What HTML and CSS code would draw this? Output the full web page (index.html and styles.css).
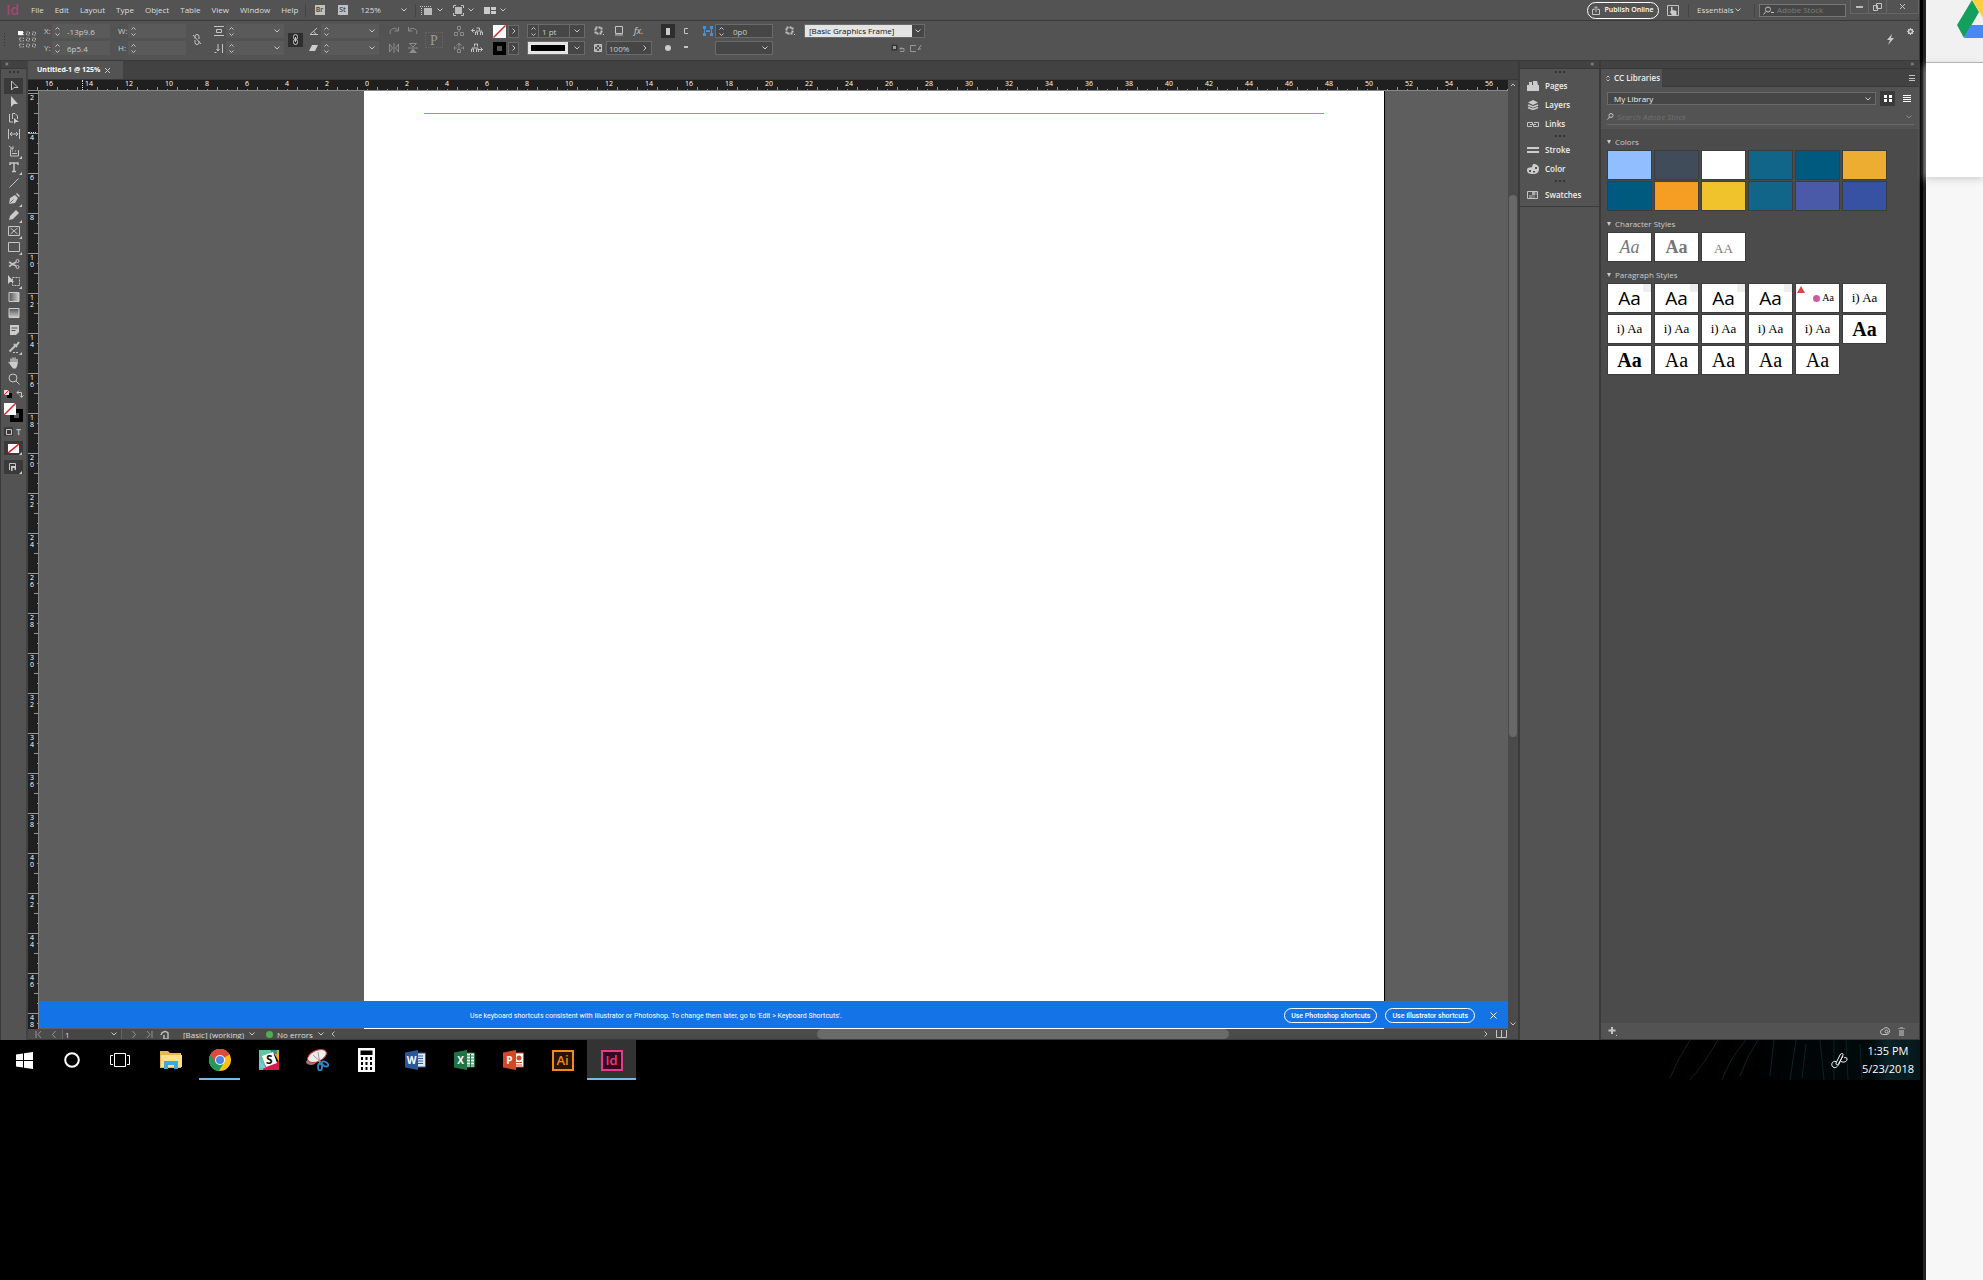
FILE: index.html
```html
<!DOCTYPE html>
<html lang="en">
<head>
<meta charset="utf-8">
<title>Untitled-1 @ 125%</title>
<link rel="stylesheet" href="styles.css">
</head>
<body>
<svg class="defs" aria-hidden="true">
<defs>
<symbol id="spin" viewBox="0 0 5 11"><path d="M.5 3.500 2.500 1.500 4.500 3.500M.5 7.500l2 2 2-2" class="ln"/></symbol>
<symbol id="chev" viewBox="0 0 6 4"><path d="M.5.5 3 3 5.500.5" class="ln"/></symbol>
<symbol id="right" viewBox="0 0 4 6"><path d="M.5.5 3 3 .5 5.500" class="ln"/></symbol>
<symbol id="none" viewBox="0 0 13 13"><path fill="#fff" d="M0 0h13v13H0z"/><path d="M.5 12.500 12.500.5" stroke="#d22" stroke-width="1.500"/></symbol>
</defs>
</svg>
<div class="screen">
<main class="desktop">
<div class="app">

<header class="menubar">
  <b class="logo">Id</b>
  <nav class="menus"><a href="#">File</a><a href="#">Edit</a><a href="#">Layout</a><a href="#">Type</a><a href="#">Object</a><a href="#">Table</a><a href="#">View</a><a href="#">Window</a><a href="#">Help</a></nav>
  <i class="bar-sep"></i>
  <button class="tag">Br</button><button class="tag">St</button>
  <label class="zoom"><select aria-label="Zoom level"><option>125%</option></select></label>
  <i class="bar-sep tight"></i>
  <div class="views">
    <button aria-label="View options"><svg width="13" height="11" viewBox="0 0 13 11"><path d="M4 3h8v7H4z" fill="#bbb"/><path d="M0 1.500h12M1.500 3v8" class="ln" stroke-dasharray="1 1"/></svg></button><svg class="chev"><use href="#chev"/></svg>
    <button aria-label="Screen mode"><svg width="11" height="11" viewBox="0 0 11 11"><path d="M2 2h7v7H2z" fill="#bbb"/><path d="M.5 3V.5H3M8 .5h2.500V3M.5 8v2.500H3M8 10.500h2.500V8" class="ln"/></svg></button><svg class="chev"><use href="#chev"/></svg>
    <button aria-label="Arrange documents"><svg width="12" height="9" viewBox="0 0 12 9"><path d="M0 1h6v7H0zM7 1h5v3H7zM7 5h5v3H7z" fill="#ccc"/></svg></button><svg class="chev"><use href="#chev"/></svg>
  </div>
  <div class="menubar-right">
    <button class="publish"><svg width="8" height="9" viewBox="0 0 8 9"><path d="M2.500 3.500h-2v5h7v-5h-2M4 6V1M2 2.500 4 .5l2 2" class="ln"/></svg>Publish Online</button>
    <button class="touch" aria-label="Touch workspace"><svg width="12" height="11" viewBox="0 0 12 11"><path d="M.5.5h11v10H.5z" class="ln"/><path d="M4 2h1.500v3l4 1v4H5L2.500 6.500H4z" fill="#ccc"/></svg></button>
    <i class="bar-sep"></i>
    <label class="workspace"><select aria-label="Workspace"><option>Essentials</option></select></label>
    <i class="bar-sep"></i>
    <label class="stock"><svg width="11" height="9" viewBox="0 0 11 9"><circle cx="5" cy="3.500" r="2.500" class="ln"/><path d="M3 5.500.5 8.500M8 6.500h3" class="ln"/></svg><input placeholder="Adobe Stock" aria-label="Search Adobe Stock"></label>
    <div class="winbtns"><button aria-label="Minimize"><svg width="7" height="7"><path d="M0 3h7v2H0z" fill="#bbb"/></svg></button><button aria-label="Restore"><svg width="9" height="8" viewBox="0 0 9 8"><path d="M3.500.5h5v5h-5zM.5 2.500h4v5h-4z" class="ln"/></svg></button><button aria-label="Close"><svg width="7" height="7" viewBox="0 0 7 7"><path d="M1 1l5 5M6 1 1 6" class="ln"/></svg></button></div>
  </div>
</header>

<section class="control" aria-label="Control panel">
  <div class="tall ref"><svg width="36" height="19" viewBox="0 0 36 19"><path d="M4.500 3v13" stroke="#333" stroke-dasharray="1 2"/><g fill="none" stroke="#aaa"><path d="M19.500 2h4v3h-4zM26.500 2h3v3h-3zM32.500 2h3v3h-3zM19.500 8h4v3h-4zM26.500 8h3v3h-3zM32.500 8h3v3h-3zM19.500 14h4v3h-4zM26.500 14h3v3h-3zM32.500 14h3v3h-3z" stroke-dasharray="2 1"/></g><path d="M18 1h5v4h-5z" fill="#fff"/></svg></div>
  <label for="fx">X:</label><label for="fy">Y:</label>
  <div class="field"><svg class="spin"><use href="#spin"/></svg><input id="fx" value="-13p9.6"></div>
  <div class="field"><svg class="spin"><use href="#spin"/></svg><input id="fy" value="6p5.4"></div>
  <label for="fw">W:</label><label for="fh">H:</label>
  <div class="field"><svg class="spin"><use href="#spin"/></svg><input id="fw"></div>
  <div class="field"><svg class="spin"><use href="#spin"/></svg><input id="fh"></div>
  <button class="tall" aria-label="Constrain proportions"><svg width="10" height="11" viewBox="0 0 10 11"><path d="M3 4.500V2.500a2 2 0 0 1 4 0V5M3 6v2.500a2 2 0 0 0 4 0V7M1 1l8 9" class="ln"/></svg></button>
  <svg class="ic" viewBox="0 0 10 10"><path d="M0 .5h10M0 9.500h10M2.500 3.500h5v3h-5z" class="ln"/></svg>
  <svg class="ic" viewBox="0 0 10 10"><path d="M.5 9.500h2M4 1v7M2.500 6 4 8l1.500-2M8.500 1v9" class="ln"/></svg>
  <div class="field"><svg class="spin"><use href="#spin"/></svg><input aria-label="Scale X"><svg class="chev"><use href="#chev"/></svg></div>
  <div class="field"><svg class="spin"><use href="#spin"/></svg><input aria-label="Scale Y"><svg class="chev"><use href="#chev"/></svg></div>
  <button class="tall chain" aria-label="Link scale"><svg width="7" height="11" viewBox="0 0 7 11"><rect x="1.500" y=".5" width="4" height="5" rx="2" class="ln"/><rect x="1.500" y="5.500" width="4" height="5" rx="2" class="ln"/><path d="M3.500 3v5" class="ln"/></svg></button>
  <svg class="ic" viewBox="0 0 10 10"><path d="M9 8.500H1L8 2M5 5.500l2 3" class="ln"/></svg>
  <svg class="ic" viewBox="0 0 10 10"><path d="M3 2h6L6 8H0z" fill="#ccc"/></svg>
  <div class="field"><svg class="spin"><use href="#spin"/></svg><input aria-label="Rotation angle"><svg class="chev"><use href="#chev"/></svg></div>
  <div class="field"><svg class="spin"><use href="#spin"/></svg><input aria-label="Shear angle"><svg class="chev"><use href="#chev"/></svg></div>
  <svg class="ic dim" viewBox="0 0 10 10"><path d="M1.500 8A4 4 0 1 1 9 5M9.500 1v4h-4" class="ln"/></svg>
  <svg class="ic dim" viewBox="0 0 10 10"><path d="M.5 1v8L3.500 5zM9.500 1v8L6.500 5zM5 0v10" class="ln"/></svg>
  <svg class="ic dim" viewBox="0 0 10 10"><path d="M8.500 8A4 4 0 1 0 1 5M.5 1v4h4" class="ln"/></svg>
  <svg class="ic dim" viewBox="0 0 10 10"><path d="M1.500.5h7L5 4zM0 5h10" class="ln"/><path d="M5 5.500 9 10H1z" fill="#ccc"/></svg>
  <div class="tall pbox">P</div>
  <svg class="ic dim" viewBox="0 0 10 10"><path d="M3.500.5h3v3h-3zM5 3v3M.5 9.500v-3h3v3zM6.500 9.500v-3h3v3z" class="ln"/></svg>
  <svg class="ic dim" viewBox="0 0 10 10"><path d="M3.500 6.500h3v3h-3zM5 0v6M2.500 2.500 5 .5l2.500 2M.5 3.500v3M9.500 3.500v3M0 5h3M7 5h3" class="ln"/></svg>
  <svg class="ic wide" viewBox="0 0 12 10"><path d="M4 4.500H.5M2.500 2.500l-2 2 2 2M5.500 2h3v2.500M4.500 9V6h2v3M9.500 9V6h2v3M5 5h6" class="ln"/></svg>
  <svg class="ic wide" viewBox="0 0 12 10"><path d="M8 6.500h3.500M9.500 4.500l2 2-2 2M3.500 3.500V1h3v2.500M.5 9V6h2v3M5.500 9V6h2v3M1 5h6" class="ln"/></svg>
  <svg class="sw"><use href="#none"/></svg>
  <svg class="sw" viewBox="0 0 13 13"><path d="M0 0h13v13H0z"/><path d="M4 4h5v5H4z" fill="#555"/></svg>
  <button class="box arrow" aria-label="Fill options"><svg class="right"><use href="#right"/></svg></button>
  <button class="box arrow" aria-label="Stroke options"><svg class="right"><use href="#right"/></svg></button>
  <div class="field box"><svg class="spin"><use href="#spin"/></svg><input class="cut" value="1 pt" aria-label="Stroke weight"><svg class="chev"><use href="#chev"/></svg></div>
  <button class="field box line" aria-label="Stroke type"><span></span><svg class="chev"><use href="#chev"/></svg></button>
  <div class="icons"><svg class="ic" viewBox="0 0 10 10"><path d="M1.500 1.500h6v6h-6z" class="ln" stroke-width="2" stroke-dasharray="2 1"/><path d="M9 8h1v1H9z" fill="#ccc"/></svg><svg class="ic" viewBox="0 0 10 10"><path d="M1.500.5h7v7h-7z" class="ln"/><path d="M1 9h8" class="ln"/></svg><em>fx.</em></div>
  <div class="icons near"><svg class="ic sm" viewBox="0 0 8 10"><path d="M.5 1.500h7v7h-7z" class="ln"/><path d="M1 2h2v2H1zM5 2h2v2H5zM3 4h2v2H3zM1 6h2v2H1zM5 6h2v2H5z" fill="#aaa"/></svg><div class="field box opacity"><input value="100%" aria-label="Opacity"><svg class="right"><use href="#right"/></svg></div></div>
  <button class="wrap on" aria-label="No text wrap"><svg width="4" height="7"><path d="M0 0h4v7H0z" fill="#ccc"/></svg></button>
  <button class="wrap" aria-label="Wrap around shape"><svg width="6" height="6"><circle cx="3" cy="3" r="3" fill="#ccc"/></svg></button>
  <svg class="ic" viewBox="0 0 10 10"><path d="M6 2.500H2.500v5H6" class="ln"/></svg>
  <svg class="ic" viewBox="0 0 10 10"><path d="M2 4h4" class="ln" stroke-width="2"/></svg>
  <svg class="ic" viewBox="0 0 10 10"><path d="M0 0h3v3H0zM7 0h3v3H7zM0 7h3v3H0zM7 7h3v3H7zM3 4h4v2H3zM1 3h1v4H1zM8 3h1v4H8z" fill="#4a90d0"/></svg>
  <i></i>
  <div class="field box"><svg class="spin"><use href="#spin"/></svg><input value="0p0" aria-label="Corner size"></div>
  <div class="field box"><select aria-label="Corner shape"><option></option></select></div>
  <svg class="ic" viewBox="0 0 10 10"><path d="M1.500 1.500h6v6h-6z" class="ln" stroke-width="2" stroke-dasharray="2 1"/><path d="M9 8h1v1H9z" fill="#ccc"/></svg>
  <i></i>
  <div class="field box style"><select aria-label="Object style"><option>[Basic Graphics Frame]</option></select></div>
  <div class="icons clear"><svg width="14" height="9" viewBox="0 0 14 9"><path d="M.5.5h6v6h-6z" fill="#222"/><path d="M2 2h3v3H2z" fill="#ccc"/><path d="M9 4.500h4v3H9M10.500 3 9 4.500 10.500 6" class="ln"/></svg><svg width="12" height="9" viewBox="0 0 12 9"><path d="M6 1.500H.5v6H6M11 1 8 6M8 5h3" class="ln"/></svg></div>
  <div class="tall quick"><svg width="9" height="11" viewBox="0 0 9 11"><path d="M6 0 1 6h3L2 11l6-7H5z" fill="#ccc"/></svg><svg class="gear" width="7" height="7" viewBox="0 0 7 7"><circle cx="3.500" cy="3.500" r="2" fill="none" stroke="#ccc" stroke-width="1.500"/><path d="M3.500 0v1M3.500 6v1M0 3.500h1M6 3.500h1M1 1l1 1M5 5l1 1M6 1 5 2M2 5 1 6" stroke="#ccc"/></svg></div>
</section>

<div class="workarea">
<aside class="tools" aria-label="Tools">
  <div class="tools-head">»</div>
  <div class="grip"></div>
  <div class="toollist">
  <button class="on" aria-label="Selection"><svg viewBox="0 0 12 12"><path d="M3.500 1v9l2.500-2.500h4z" class="ln"/></svg></button>
  <button aria-label="Direct selection"><svg viewBox="0 0 12 12"><path d="M3 0v11l3-3h4z" fill="#ccc"/></svg></button>
  <button aria-label="Page"><svg viewBox="0 0 12 12"><path d="M1.500 2v8H5M4.500 7V1.500H7L9.500 4v3" class="ln"/><path d="M6 6v6l2-2h3z" fill="#ccc"/></svg></button>
  <button class="end" aria-label="Gap"><svg viewBox="0 0 12 12"><path d="M.5 1v10M11.500 1v10M2 6h8M4 4 2 6l2 2M8 4l2 2-2 2" class="ln"/></svg></button>
  <button class="sub" aria-label="Content collector"><svg viewBox="0 0 12 12"><path d="M2.500 5v6h8V5M4 6h1M7 6h1M4 8.500h5M1 1l4 3M5 1v3H2" class="ln"/></svg></button>
  <button class="sub" aria-label="Type"><svg viewBox="0 0 12 12"><path d="M2 4V2h8v2M6 2v8.500M4 10.500h4" class="ln" stroke-width="1.500"/></svg></button>
  <button aria-label="Line"><svg viewBox="0 0 12 12"><path d="M1.500 10.500l9-9" class="ln"/></svg></button>
  <button class="sub" aria-label="Pen"><svg viewBox="0 0 12 12"><path d="M1 11l1-6 5-3 3 3-3 5zM8 1l1-1 3 3-1 1z" fill="#ccc"/><path d="M1.500 10.500l4-4" stroke="#444" stroke-width=".7"/></svg></button>
  <button class="sub" aria-label="Pencil"><svg viewBox="0 0 12 12"><path d="M1 11l1-4 6-6 3 3-6 6z" fill="#ccc"/></svg></button>
  <button class="sub" aria-label="Rectangle frame"><svg viewBox="0 0 12 12"><path d="M.5 1.500h11v9H.5zM2.500 3l7 6M9.500 3l-7 6" class="ln"/></svg></button>
  <button class="end sub" aria-label="Rectangle"><svg viewBox="0 0 12 12"><path d="M.5 1.500h11v9H.5z" class="ln"/></svg></button>
  <button class="end" aria-label="Scissors"><svg viewBox="0 0 12 12"><path d="M1 4l7 4M1 8.500 8 4" class="ln" stroke-width="1.500"/><circle cx="9.500" cy="3" r="1.500" class="ln"/><circle cx="9.500" cy="9" r="1.500" class="ln"/></svg></button>
  <button class="sub" aria-label="Free transform"><svg viewBox="0 0 12 12"><path d="M4.500 2.500h7v8h-7z" class="ln" stroke-dasharray="2 1"/><path d="M0 0v9l2-2h4z" fill="#ccc"/></svg></button>
  <button aria-label="Gradient swatch"><svg viewBox="0 0 12 12"><linearGradient id="g1"><stop stop-color="#555"/><stop offset="1" stop-color="#ccc"/></linearGradient><path d="M1 1.500h10v9H1z" fill="url(#g1)" stroke="#ccc"/></svg></button>
  <button class="end" aria-label="Gradient feather"><svg viewBox="0 0 12 12"><linearGradient id="g2" x2="0" y2="1"><stop stop-color="#555"/><stop offset="1" stop-color="#ccc"/></linearGradient><path d="M1 1.500h10v9H1z" fill="url(#g2)" stroke="#ccc"/></svg></button>
  <button class="end" aria-label="Note"><svg viewBox="0 0 12 12"><path d="M2 1h9v7l-3 3H2z" fill="#ccc"/><path d="M3.500 4h6M3.500 6.500h4" stroke="#555"/></svg></button>
  <button class="sub" aria-label="Eyedropper"><svg viewBox="0 0 12 12"><path d="M1.500 10.500 7 5" class="ln" stroke-width="2"/><path d="M6 3l3 3M8 5l3-4" class="ln" stroke-width="2"/><path d="M5 11.500h6" class="ln" stroke-dasharray="2 1"/></svg></button>
  <button aria-label="Hand"><svg viewBox="0 0 12 12"><path d="M3 6V2M5 5V1M7 5V1M9 6V2.500M3 7 1 5.500" class="ln" stroke-width="1.400" stroke-linecap="round"/><path d="M2.500 5h7v3L8 11.500H5L2 7.500z" fill="#ccc"/></svg></button>
  <button aria-label="Zoom"><svg viewBox="0 0 12 12"><circle cx="5" cy="5" r="4" class="ln"/><path d="M8 8l3.500 3.500" class="ln"/></svg></button>
  </div>
  <div class="pairs"><svg width="8" height="8" viewBox="0 0 8 8"><path d="M3 3h5v5H3z"/><path d="M0 0h5v5H0z" fill="#ddd"/><path d="M0 5l5-5" stroke="#d22"/></svg><svg width="8" height="8" viewBox="0 0 8 8"><path d="M1 2.500h4.500V7M3 .5l-2 2 2 2M4 5.500l1.500 2 2-2" class="ln"/></svg></div>
  <div class="fillstroke"><svg width="20" height="20" viewBox="0 0 20 20"><path d="M6 6h13v13H6z"/><path d="M10 10h5v5h-5z" fill="#555"/><path d="M0 0h12v12H0z" fill="#fff"/><path d="M0 12 12 0" stroke="#d22" stroke-width="1.500"/></svg></div>
  <div class="pairs format"><button class="on" aria-label="Format container"><svg width="6" height="6"><path d="M.5.5h5v5h-5z" class="ln"/></svg></button><b>T</b></div>
  <button class="wide-btn sub" aria-label="Apply none"><svg width="11" height="9" viewBox="0 0 11 9"><path d="M0 0h11v9H0z" fill="#fff"/><path d="M0 9 11 0" stroke="#d22" stroke-width="1.500"/></svg></button>
  <button class="wide-btn sub" aria-label="Screen mode"><svg width="9" height="8" viewBox="0 0 9 8"><path d="M.5 7V.5h6V3" class="ln"/><path d="M2 3h5v4H5.500V5H3.500v3H2z" fill="#ccc"/></svg></button>
</aside>

<section class="document">
  <div class="tabs"><div class="tab">Untitled-1 @ 125%<button aria-label="Close document"><svg width="5" height="5" viewBox="0 0 5 5"><path d="M0 0l5 5M5 0 0 5" class="ln"/></svg></button></div></div>
  <div class="docgrid">
    <div class="hruler"><i class="mark"></i><span>16</span><span>14</span><span>12</span><span>10</span><span>8</span><span>6</span><span>4</span><span>2</span><span>0</span><span>2</span><span>4</span><span>6</span><span>8</span><span>10</span><span>12</span><span>14</span><span>16</span><span>18</span><span>20</span><span>22</span><span>24</span><span>26</span><span>28</span><span>30</span><span>32</span><span>34</span><span>36</span><span>38</span><span>40</span><span>42</span><span>44</span><span>46</span><span>48</span><span>50</span><span>52</span><span>54</span><span>56</span></div>
    <div class="vruler"><i class="mark"></i><span>2</span><span>4</span><span>6</span><span>8</span><span>10</span><span>12</span><span>14</span><span>16</span><span>18</span><span>20</span><span>22</span><span>24</span><span>26</span><span>28</span><span>30</span><span>32</span><span>34</span><span>36</span><span>38</span><span>40</span><span>42</span><span>44</span><span>46</span><span>48</span></div>
    <div class="canvas">
      <div class="page"><div class="guide"></div></div>
      <div class="banner">
        <p>Use keyboard shortcuts consistent with Illustrator or Photoshop. To change them later, go to 'Edit &gt; Keyboard Shortcuts'.</p>
        <button class="pill">Use Photoshop shortcuts</button><button class="pill">Use Illustrator shortcuts</button>
        <button class="dismiss" aria-label="Dismiss"><svg width="7" height="7" viewBox="0 0 7 7"><path d="M.5.5l6 6M6.500.5l-6 6" stroke="#fff"/></svg></button>
      </div>
      <div class="sliver"></div>
    </div>
    <div class="vscroll"><svg width="6" height="4" viewBox="0 0 6 4"><path d="M1 3l2-2 2 2" class="ln"/></svg><div class="thumb"></div><svg class="chev"><use href="#chev"/></svg></div>
  </div>
  <footer class="status">
    <div class="pager"><svg width="7" height="7" viewBox="0 0 7 7"><path d="M1 0v7M6 0 3 3.500 6 7" class="ln"/></svg><svg width="4" height="7" viewBox="0 0 4 7"><path d="M3.500 0 .5 3.500 3.500 7" class="ln"/></svg></div>
    <label class="pageno"><select aria-label="Page"><option>1</option></select></label>
    <div class="pager next"><svg width="4" height="7" viewBox="0 0 4 7"><path d="M.5 0l3 3.500L.5 7" class="ln"/></svg><svg width="7" height="7" viewBox="0 0 7 7"><path d="M6 0v7M1 0l3 3.500L1 7" class="ln"/></svg></div>
    <svg class="pre" width="11" height="9" viewBox="0 0 11 9"><path d="M1 5a4 4 0 0 1 7-2v6H4V5" fill="none" stroke="#bbb" stroke-width="1.500"/></svg>
    <label class="profile"><select aria-label="Preflight profile"><option>[Basic] (working)</option></select></label>
    <i class="dot"></i>
    <label class="errors"><select aria-label="Preflight status"><option>No errors</option></select></label>
    <div class="hscroll"><svg width="4" height="6" viewBox="0 0 4 6"><path d="M3.500.5 1 3l2.500 2.500" class="ln"/></svg><div class="thumb"></div><svg class="right"><use href="#right"/></svg></div>
    <button class="split" aria-label="Split layout view"><svg width="12" height="8" viewBox="0 0 12 8"><path d="M.5 0v7.500h10V0M5.500 0v7" class="ln"/></svg></button>
  </footer>
</section>

<aside class="dock" aria-label="Collapsed panels">
  <div class="dock-head">«</div>
  <div class="dock-body">
  <div class="grip"></div>
  <button><svg viewBox="0 0 12 10"><path d="M0 4h12v6H0zM2 1h3v3H2zM6 0h4l1 4H6z" fill="#ccc"/></svg>Pages</button>
  <button><svg viewBox="0 0 12 10"><path d="M6 0l5 2.500-5 2.500-5-2.500z" fill="#ccc"/><path d="M1 5l5 2 5-2M1 7.500l5 2 5-2" fill="none" stroke="#ccc" stroke-width="1.500"/></svg>Layers</button>
  <button><svg viewBox="0 0 12 10"><path d="M5 7.500H.5v-4h5v2M7 3.500h4.500v4h-5v-2M3 5.500h6" class="ln"/></svg>Links</button>
  <div class="grip"></div>
  <button><svg viewBox="0 0 12 10"><path d="M0 2h12v2H0zM0 6h12v2H0z" fill="#ccc"/></svg>Stroke</button>
  <button><svg viewBox="0 0 12 10"><path d="M6 0c4 0 6 2 6 5s-2 5-6 5-6-1-6-4 3-2 5-3zM2 6h2v2H2zM6 7h2v1.500H6zM8 3h2v2H8z" fill="#ccc" fill-rule="evenodd"/></svg>Color</button>
  <div class="grip"></div>
  <button><svg viewBox="0 0 12 10"><path d="M.5 1.500h10v7H.5z" class="ln"/><path d="M2 5h3v3H2z" fill="#888"/><path d="M5 2h3v3H5z" fill="#aaa"/><path d="M5 5h3v3H5zM8 2h2v3H8z" fill="#777"/></svg>Swatches</button>
  </div>
</aside>

<aside class="libs" aria-label="CC Libraries">
  <div class="dock-head">»</div>
  <div class="libtabs"><div class="libtab"><svg width="4" height="7" viewBox="0 0 4 7"><path d="M.5 2.500 2 1l1.500 1.500M.5 4.500 2 6l1.500-1.500" class="ln"/></svg>CC Libraries</div><button aria-label="Panel menu"><svg width="6" height="6"><path d="M0 .5h6M0 3.500h6M0 5.500h6" class="ln"/></svg></button></div>
  <div class="libtop">
    <div class="pick"><select aria-label="Library"><option>My Library</option></select>
      <button class="on" aria-label="Grid view"><svg width="8" height="7"><path d="M0 0h3v3H0zM5 0h3v3H5zM0 4h3v3H0zM5 4h3v3H5z" fill="#fff"/></svg></button>
      <button aria-label="List view"><svg width="8" height="7"><path d="M0 .5h8M0 2.500h8M0 4.500h8M0 6.500h8" fill="none" stroke="#fff"/></svg></button></div>
    <div class="find"><svg width="7" height="7" viewBox="0 0 7 7"><circle cx="4" cy="2.500" r="2" class="ln"/><path d="M2.500 4 .5 6.500" class="ln"/></svg><input placeholder="Search Adobe Stock" aria-label="Search"><svg class="chev dim"><use href="#chev"/></svg></div>
  </div>
  <div class="libbody">
    <h2>Colors</h2>
    <div class="cells">
      <i class="c1"></i><i class="c2"></i><i class="c3"></i><i class="c4"></i><i class="c5"></i><i class="c6"></i>
      <i class="c5"></i><i class="c7"></i><i class="c8"></i><i class="c4"></i><i class="c9"></i><i class="c10"></i>
    </div>
    <h2>Character Styles</h2>
    <div class="cells char"><span class="it">Aa</span><span class="bd">Aa</span><span class="sc">AA</span></div>
    <h2>Paragraph Styles</h2>
    <div class="cells para">
      <span class="sans">Aa</span><span class="sans">Aa</span><span class="sans">Aa</span><span class="sans">Aa</span>
      <span class="bul"><svg class="warn" width="8" height="7"><path d="M4 0l4 7H0z" fill="#d9434a"/></svg><i></i>Aa</span><span class="num">i) Aa</span>
      <span class="num">i) Aa</span><span class="num">i) Aa</span><span class="num">i) Aa</span><span class="num">i) Aa</span><span class="num">i) Aa</span><span class="bd">Aa</span>
      <span class="bd">Aa</span><span>Aa</span><span>Aa</span><span>Aa</span><span>Aa</span>
    </div>
  </div>
  <div class="libfoot"><button aria-label="Add content"><svg width="9" height="10" viewBox="0 0 9 10"><path d="M4 1v7M.5 4.500h7" class="ln" stroke-width="2"/><path d="M8 9h1v1H8z" fill="#ccc"/></svg></button><svg class="cloud" width="11" height="8" viewBox="0 0 11 8"><path d="M3 7.500a2.500 2.500 0 0 1 0-5A3.500 3.500 0 1 1 7 7.500z" class="ln"/><circle cx="6.500" cy="4.500" r="1.500" class="ln"/></svg><button aria-label="Delete"><svg class="dim" width="7" height="9" viewBox="0 0 7 9"><path d="M0 1h7v1H0zM2 0h3v1H2zM1 3h5v6H1z" fill="#ccc"/></svg></button></div>
</aside>
</div>
</div>

<footer class="taskbar">
  <button aria-label="Start"><svg width="17" height="17" viewBox="0 0 17 17"><path d="M0 2.500 7 1.500V8H0zM8 1.300 17 0v8H8zM0 9h7v6.500L0 14.500zM8 9h9v8l-9-1.300z" fill="#fff"/></svg></button>
  <button aria-label="Cortana"><svg width="16" height="16" viewBox="0 0 16 16"><circle cx="8" cy="8" r="6.800" fill="none" stroke="#fff" stroke-width="2"/></svg></button>
  <button aria-label="Task view"><svg width="20" height="14" viewBox="0 0 20 14"><path d="M4.500.5h11v13h-11zM3 2.500H.5v9H3M17 2.500h2.500v9H17" fill="none" stroke="#fff"/></svg></button>
  <button aria-label="File Explorer"><svg width="22" height="20" viewBox="0 0 22 20"><path d="M0 1h8l2 2h11v15H0z" fill="#e8b84a"/><path d="M1 5h21v12H1z" fill="#ffe08a"/><path d="M4 11h14v8h-4v-4H8v4H4z" fill="#3fa9dc"/></svg></button>
  <button class="running" aria-label="Chrome"><svg width="22" height="22" viewBox="0 0 22 22"><circle cx="11" cy="11" r="11" fill="#fbc116"/><path d="M11 11 1.500 5.500A11 11 0 0 1 20.500 5.500z" fill="#dd4b3e"/><path d="M11 11 1.500 5.500A11 11 0 0 0 10 22l4-7z" fill="#1f9d58"/><path d="M11 6h9.800A11 11 0 0 0 1.500 5.500L6 13z" fill="#dd4b3e"/><circle cx="11" cy="11" r="5" fill="#fff"/><circle cx="11" cy="11" r="4" fill="#4a86e8"/></svg></button>
  <button aria-label="Slack"><svg width="20" height="20" viewBox="0 0 20 20"><path d="M0 0h14L8 20H0z" fill="#64c2a6"/><path d="M13 0h7v12z" fill="#e8a723"/><path d="M12 0h6v4H12z" fill="#38917d"/><path d="M4 20l2-5 14-4v9z" fill="#d8174c"/><path d="M0 9l7 9H0z" fill="#70cadb"/><path d="M3 6 14 2l4 11-11 4z" fill="#fff"/><text x="7" y="14" font-size="12" font-weight="700" font-family="Open Sans, sans-serif" fill="#111">S</text></svg></button>
  <button aria-label="Snipping Tool"><svg width="23" height="22" viewBox="0 0 23 22"><ellipse cx="5" cy="13" rx="5" ry="3" fill="#9a7776"/><ellipse cx="11" cy="7" rx="10" ry="5.500" transform="rotate(-25 11 7)" fill="#f2eeee" stroke="#c8453c"/><path d="M12 3l2 12M7 6l9 8" stroke="#999"/><g fill="none" stroke="#2b8ad0" stroke-width="1.800"><ellipse cx="14" cy="18" rx="2" ry="3.500"/><ellipse cx="19" cy="15" rx="3.500" ry="2" transform="rotate(30 19 15)"/></g></svg></button>
  <button aria-label="Calculator"><svg width="17" height="24" viewBox="0 0 17 24"><path d="M0 0h17v24H0z" fill="#fff"/><path d="M2.500 2.500h12V7h-12zM3 9h2v3H3zM7.500 9h2v3h-2zM12 9h2v3h-2zM3 14h2v3H3zM7.500 14h2v3h-2zM12 14h2v3h-2zM3 19h2v3H3zM7.500 19h2v3h-2zM12 19h2v3h-2z"/></svg></button>
  <button class="office word" aria-label="Word"><svg width="21" height="20" viewBox="0 0 21 20"><path d="M12 3h8.500v14H12z" fill="#dfe8f5" stroke="#2b579a"/><path d="M13 6h5M13 8.500h5M13 11h5M13 13.500h5" stroke="#2b579a"/><path d="M0 2.500 13 0v20L0 17.500z" fill="#2b579a"/></svg><b>W</b></button>
  <button class="office" aria-label="Excel"><svg width="21" height="20" viewBox="0 0 21 20"><path d="M12 3h8.500v14H12z" fill="#fff" stroke="#217346"/><path d="M13 6h7M13 9h7M13 12h7M13 15h7M16.500 4v13" stroke="#217346"/><path d="M0 2.500 13 0v20L0 17.500z" fill="#217346"/></svg><b>X</b></button>
  <button class="office" aria-label="PowerPoint"><svg width="21" height="20" viewBox="0 0 21 20"><path d="M12 3h8.500v14H12z" fill="#fff" stroke="#d24726"/><circle cx="16" cy="8" r="2.500" fill="#d24726"/><path d="M13 12.500h6M13 15h6" stroke="#d24726"/><path d="M0 2.500 13 0v20L0 17.500z" fill="#d24726"/></svg><b>P</b></button>
  <button aria-label="Illustrator"><span class="adobe ai">Ai</span></button>
  <button class="active" aria-label="InDesign"><span class="adobe id">Id</span></button>
  <div class="tray">
    <svg class="fronds" viewBox="0 0 264 40" preserveAspectRatio="none"><defs><linearGradient id="tg"><stop stop-color="#001014" stop-opacity="0"/><stop offset=".7" stop-color="#02090b"/><stop offset=".8" stop-color="#082228"/><stop offset="1" stop-color="#06171b"/></linearGradient></defs><path d="M100 0h164v40H100z" fill="url(#tg)"/><path d="M34 0Q22 18 14 38M62 0Q48 24 34 40M90 0Q74 18 66 40M102 0Q90 18 84 36M118 0l-4 36M140 0l-6 40M150 4l-4 34M164 0l4 40M178 0v40M190 0l2 40M204 4l2 36M238 4l4 36M252 0v40" stroke="#0c2426" fill="none"/></svg>
    <svg class="penicon" width="17" height="17" viewBox="0 0 17 17"><path d="M5 9.500C1 8.500-.5 13 2 15s5-1 6-3l4-9c.5-2-2-2-3 0l-4 8c-.5 2 1.500 2.500 2.500.5L12 4M10 9.500c3 1.500 6 0 6-2.500 0-1.500-2-2-3-1" fill="none" stroke="#fff"/></svg>
    <time>1:35 PM<br>5/23/2018</time>
  </div>
</footer>
</main>

<aside class="neighbour">
  <div class="drive"><svg width="26" height="38" viewBox="0 0 26 38"><path d="M0 25 15 0l7 12L7 38z" fill="#12a05c"/><path d="M15 0h11v18z" fill="#ffce44"/><path d="M14 25h12v13H7z" fill="#4688f4"/></svg></div>
  <div class="sheet"></div>
</aside>
</div>
</body>
</html>
```
FILE: styles.css
```css
* { box-sizing: border-box; }
body { margin: 0; background: #000; color: #ddd; font: 8px/10px "Open Sans", "Noto Sans", sans-serif; }
button, input, select { font: inherit; color: inherit; background: none; border: 0; border-radius: 0; padding: 0; margin: 0; min-width: 0; }
button { display: flex; align-items: center; justify-content: center; flex: none; }
select { --chevron: url("data:image/svg+xml,%3Csvg xmlns='http://www.w3.org/2000/svg' width='6' height='4'%3E%3Cpath d='M.5.5 3 3 5.5.5' fill='none' stroke='%23ccc'/%3E%3C/svg%3E"); appearance: none; background: var(--chevron) no-repeat right 4px center; }
a { color: inherit; text-decoration: none; }
i { display: block; }
svg { display: block; flex: none; }
.defs { position: absolute; width: 0; height: 0; }
.ln { fill: none; stroke: #c4c4c4; }
.dim { opacity: .5; }
.spin { width: 5px; height: 11px; }
.chev { width: 6px; height: 4px; }
.right { width: 4px; height: 6px; }
.grip::before { content: ""; display: block; width: 10px; height: 2px; margin: 0 auto; background: repeating-linear-gradient(90deg, #333 0 2px, transparent 2px 4px); }

.screen { display: flex; min-height: 100vh; }
.desktop { flex: 1; min-width: 0; padding-right: 3px; }
.app { background: #535353; border-right: 1px solid #3a3a3a; }

/* Menu bar */
.menubar { display: flex; align-items: center; height: 21px; border-bottom: 1px solid #3a3a3a; padding-left: 6px; }
.logo { width: 25px; color: #a04a70; font-size: 14px; font-weight: 600; line-height: 18px; }
.menus { display: flex; gap: 11px; }
.bar-sep { width: 1px; height: 13px; background: #444; margin: 0 9px 0 6px; }
.bar-sep.tight { margin: 0 4px; }
.tag { width: 10px; height: 10px; background: #c0c0c0; color: #444; font-size: 7px; font-weight: 600; margin-right: 13px; }
.zoom select { width: 50px; }
.views { display: flex; align-items: center; gap: 4px; }
.views .chev { margin-right: 6px; }
.menubar-right { display: flex; align-items: center; margin-left: auto; height: 20px; }
.publish { height: 17px; width: 72px; gap: 4px; border: 1px solid #fff; border-radius: 9px; color: #fff; font-size: 7px; font-weight: 600; }
.touch { margin-left: 8px; }
.workspace select { width: 52px; padding-left: 4px; }
.menubar-right .bar-sep { margin: 0 4px 0 9px; }
.stock { display: flex; align-items: center; gap: 3px; width: 87px; height: 13px; border: 1px solid #777; background: #464646; padding-left: 3px; }
.stock input { width: 64px; }
input::placeholder { color: #7c7c7c; opacity: 1; }
.winbtns { display: flex; align-self: flex-start; margin: 0 0 0 4px; border: 1px solid #656565; border-top: 0; }
.winbtns button { width: 18px; height: 13px; border-right: 1px solid #656565; }
.winbtns button:last-child { width: 31px; border-right: 0; }

/* Control panel */
.control { display: grid; grid-auto-flow: column; grid-template-rows: 14px 14px; row-gap: 3px; align-items: center; height: 40px; padding: 3px 0 5px; border-bottom: 1px solid #3a3a3a; color: #ccc;
  grid-template-columns: 44px 8px 66px 10px 64px 22px 12px 62px 21px 12px 68px 19px 17px 29px 17px 22px 15px 19px 67px 67px 21px 21px 12px 70px 19px 1fr 33px; }
.tall { grid-row: span 2; justify-self: start; }
.field { display: flex; align-items: center; width: 58px; height: 14px; background: #5a5a5a; padding: 0 4px 0 3px; }
.field input { flex: 1; padding: 0 0 0 7px; height: 12px; }
.box { background: #464646; border: 1px solid #6a6a6a; }
.box .spin { margin-right: 2px; }
.cut { border: solid #6a6a6a; border-width: 0 1px; margin-right: 4px; }
.field .cut { padding-left: 3px; }
.field select { width: 100%; height: 12px; }
.field:has(select) { padding: 0; }
.chain { width: 15px; height: 14px; background: #2e2e2e; }
.ic { width: 10px; height: 10px; }
.ic.wide { width: 12px; }
.ic.sm { width: 8px; }
.pbox { width: 18px; height: 16px; font: 14px/16px "Liberation Serif", serif; text-align: center; color: #999; border: 1px dotted #666; }
.sw { width: 13px; height: 13px; }
.arrow { width: 11px; height: 13px; }
.line span { flex: 1; height: 12px; border: solid #e4e4e4; border-width: 3px; background: #000; margin: 0 6px 0 -3px; }
.icons { display: flex; align-items: center; gap: 10px; }
.icons em { font-size: 9px; }
.near { gap: 4px; }
.opacity { width: 46px; padding-left: 0; }
.opacity input { padding-left: 2px; }
.wrap { width: 14px; height: 14px; }
.wrap.on { background: #2e2e2e; }
.style { width: 121px; color: #111; }
.style select { padding-left: 4px; background: var(--chevron) no-repeat right 3px center, linear-gradient(#464646, #464646) no-repeat right / 12px 100%, #e4e4e4; }
.clear { margin-left: 87px; gap: 5px; opacity: .6; }
.quick { display: flex; gap: 12px; align-items: center; height: 31px; }
.gear { align-self: flex-start; margin-top: 4px; }

/* Work area */
.workarea { display: flex; }
.tools { width: 28px; flex: none; border-left: 1px solid #3a3a3a; border-right: 2px solid #424242; }
.tools-head, .dock-head { height: 8px; background: #424242; border-bottom: 1px solid #383838; font-size: 7px; line-height: 5px; color: #bbb; }
.tools-head { padding-left: 4px; }
.tools .grip { height: 9px; padding-top: 2px; }
.toollist { display: flex; flex-direction: column; align-items: center; }
.toollist button { width: 19px; height: 16px; position: relative; }
.toollist svg { width: 12px; height: 12px; }
.toollist .end { margin-bottom: 1px; }
.on { background: #3a3a3a; }
.sub { position: relative; }
.sub::after { content: ""; position: absolute; right: 1px; bottom: 0; border-left: 3px solid transparent; border-bottom: 3px solid #ccc; }
.pairs { display: flex; justify-content: space-between; padding: 3px 2px 0 3px; height: 16px; }
.fillstroke { padding: 0 0 0 3px; height: 24px; }
.format { padding-top: 0; height: 14px; align-items: flex-start; color: #bbb; }
.format button { width: 9px; height: 9px; }
.format b { padding-right: 3px; }
.wide-btn { width: 19px; height: 14px; margin: 0 0 5px 3px; background: #3a3a3a; }

.document { flex: 1; min-width: 0; border-right: 2px solid #3a3a3a; background: #4a4a4a; display: flex; flex-direction: column; }
.tabs { height: 19px; background: #424242; border-bottom: 1px solid #383838; display: flex; }
.tab { display: flex; align-items: center; width: 95px; background: #535353; padding-left: 9px; gap: 5px; color: #fff; font-weight: 700; font-size: 7px; white-space: nowrap; }
.docgrid { display: grid; grid-template-columns: 11px 1fr 10px; grid-template-rows: 11px auto; }
.hruler { grid-column: span 2; position: relative; display: flex; overflow: hidden; padding-left: 17px; border-bottom: 1px solid #888; color: #fff; font-size: 7px; line-height: 7px;
  background: repeating-linear-gradient(90deg, transparent 0 9px, #999 9px 10px, transparent 10px 20px) 0 7px / 100% 3px no-repeat, repeating-linear-gradient(90deg, transparent 0 19px, #999 19px 20px) 0 9px / 100% 1px no-repeat, #1f1f1f; }
.hruler span { width: 40px; flex: none; }
.vruler { grid-row: 2; height: 938px; position: relative; overflow: hidden; border-right: 1px solid #888; padding-top: 2px; color: #fff; font-size: 7px; line-height: 7px;
  background: repeating-linear-gradient(transparent 0 2px, #999 2px 3px, transparent 3px 40px) 0 0 / 100% no-repeat, repeating-linear-gradient(transparent 0 2px, #999 2px 3px, transparent 3px 20px) 6px 0 / 4px no-repeat, repeating-linear-gradient(transparent 0 2px, #999 2px 3px, transparent 3px 10px) 9px 0 / 1px no-repeat, #1f1f1f; }
.vruler span { display: block; width: 6px; height: 40px; margin-left: 2px; padding-top: 1px; word-break: break-all; }
.mark { position: absolute; }
.hruler .mark { left: 54px; top: 0; height: 10px; border-left: 1px dotted #ddd; }
.vruler .mark { left: 0; top: 41px; width: 8px; border-top: 1px dotted #ddd; }
.canvas { background: #5e5e5e; display: flex; flex-direction: column; min-width: 0; }
.page { flex: 1; margin: 0 123px 0 325px; background: #fff; border-right: 1px solid #000; padding: 22px 60px 0; }
.guide { height: 1px; background: #cf6ec8; }
.banner { display: flex; align-items: center; height: 27px; background: #1473e6; color: #fff; padding: 2px 5px 0 0; }
.banner p { margin: 0 auto 0 0; padding-left: 431px; font: 7px/10px Roboto, sans-serif; white-space: nowrap; }
.pill { height: 15px; padding: 0 6px; margin-right: 8px; border: 1px solid #fff; border-radius: 8px; font: 500 7px/10px Roboto, sans-serif; }
.dismiss { width: 20px; height: 20px; }
.sliver { height: 1px; background: #fff; margin: 0 124px 0 325px; }
.vscroll { grid-column: 3; grid-row: 1 / 3; display: flex; flex-direction: column; align-items: center; padding: 3px 0; }
.vscroll .thumb { width: 8px; height: 542px; border-radius: 4px; background: #686868; margin: 108px 0 auto; }
.status { display: flex; align-items: center; height: 11px; background: #4b4b4b; border-bottom: 1px solid #3a3a3a; line-height: 9px; }
.status select { height: 9px; padding: 0; }
.pager { display: flex; gap: 10px; padding-left: 7px; width: 34px; opacity: .6; }
.pager.next { padding-left: 10px; width: 38px; }
.pageno select { width: 60px; border: 1px solid #666; border-width: 0 1px; background-color: #464646; padding-left: 2px; }
.pre { margin: 0 12px 0 0; }
.profile select { width: 76px; }
.dot { width: 7px; height: 7px; border-radius: 50%; background: #4caf50; margin: 0 4px 0 7px; }
.errors select { width: 51px; }
.hscroll { flex: 1; display: flex; align-items: center; padding: 0 8px 0 3px; }
.hscroll .thumb { width: 412px; height: 10px; border-radius: 5px; background: #6a6a6a; margin: 0 auto 0 482px; }
.split { margin-right: 10px; }

/* Collapsed panels */
.dock { width: 80px; flex: none; border-right: 1px solid #3a3a3a; }
.dock-head { text-align: right; padding-right: 5px; }
.dock-body { border-bottom: 1px solid #3a3a3a; padding-bottom: 2px; }
.dock .grip { padding-top: 2px; height: 7px; }
.dock button { width: 100%; height: 19px; justify-content: flex-start; gap: 6px; padding-left: 7px; color: #eee; font-weight: 600; }
.dock button svg { width: 12px; height: 10px; }

/* Libraries */
.libs { width: 319px; flex: none; border-left: 1px solid #3a3a3a; background: #4b4b4b; display: flex; flex-direction: column; }
.libtabs { display: flex; justify-content: space-between; height: 18px; background: #424242; border-bottom: 1px solid #383838; padding-right: 4px; }
.libtab { display: flex; align-items: center; gap: 4px; width: 61px; height: 18px; padding-left: 5px; background: #535353; color: #eee; font-weight: 600; white-space: nowrap; }
.libtop { background: #535353; padding: 4px 5px 4px 6px; }
.pick { display: flex; align-items: center; gap: 4px; }
.pick select { flex: 1; height: 13px; border: 1px solid #6a6a6a; background-color: #464646; padding-left: 6px; color: #eee; }
.pick button { width: 15px; height: 15px; }
.find { display: flex; align-items: center; gap: 3px; height: 19px; padding: 3px 2px 0 0; border-bottom: 1px solid #6a6a6a; }
.find input { flex: 1; font-style: italic; }
.find input::placeholder { color: #707070; }
.libbody { flex: 1; padding: 6px 5px 0 6px; }
.libbody h2 { display: flex; align-items: center; gap: 4px; height: 13px; margin: 0 0 2px; font-size: 8px; font-weight: 400; color: #ccc; }
.libbody h2::before { content: ""; border: solid transparent; border-width: 4px 2px 0; border-top-color: #ccc; }
.cells { display: grid; grid-template-columns: repeat(6, 45px); grid-auto-rows: 30px; gap: 1px 2px; margin-bottom: 6px; }
.cells > * { border: 1px solid #3c3c3c; }
.cells span { display: flex; align-items: center; justify-content: center; position: relative; background: #fff; color: #000; font: 20px/28px "Liberation Serif", serif; }
.cells.char span { color: #777; font-size: 18px; }
.cells .it { font-style: italic; }
.cells .bd { font-weight: 700; }
.cells.char .sc { font-size: 13px; padding-top: 3px; }
.cells .sans { font: 19px/28px "Open Sans", sans-serif; }
.sans::after { content: ""; position: absolute; right: 0; top: 0; width: 8px; height: 8px; background: #eee; }
.cells .num { font-size: 13px; }
.cells .bul { font-size: 10px; padding-left: 12px; gap: 2px; }
.bul i { width: 7px; height: 7px; border-radius: 50%; background: #d05aa0; }
.warn { position: absolute; left: 1px; top: 2px; }
.c1 { background: #91beff; } .c2 { background: #414c5b; } .c3 { background: #fff; } .c4 { background: #116588; } .c5 { background: #005a80; }
.c6 { background: #ecad30; } .c7 { background: #f59e23; } .c8 { background: #f0c22c; } .c9 { background: #4a5aa8; } .c10 { background: #3852a3; }
.libfoot { display: flex; align-items: center; height: 17px; background: #535353; border-bottom: 1px solid #3a3a3a; padding: 0 14px 0 7px; }
.cloud { margin: 0 7px 0 auto; }

/* Taskbar */
.taskbar { display: flex; height: 40px; background: #000; }
.taskbar > button { width: 49px; height: 40px; position: relative; }
.taskbar > button:nth-child(-n+3) { width: 48px; }
.taskbar > button:nth-child(4) { margin-left: 2px; }
.running::after, .active::after { content: ""; position: absolute; left: 4px; right: 4px; bottom: 0; height: 2px; background: #76b9ed; }
.active { background: #333; }
.active::after { left: 0; right: 0; }
.office b { position: absolute; left: 15px; top: 14px; width: 11px; color: #fff; font: 700 10px/12px "Open Sans", sans-serif; text-align: center; }
.adobe { width: 22px; height: 21px; border: 2px solid; font: 600 13px/16px "Open Sans", sans-serif; text-align: center; }
.ai { color: #f08a1a; background: #261300; }
.id { color: #e8388a; background: #35071e; }
.tray { margin-left: auto; width: 264px; position: relative; display: flex; align-items: center; justify-content: flex-end; gap: 14px; padding-right: 6px; color: #fff; }
.fronds { position: absolute; inset: 0; width: 100%; height: 100%; }
.penicon, .tray time { position: relative; }
.tray time { font-size: 11px; line-height: 18px; text-align: center; }

/* Neighbouring window */
.neighbour { width: 60px; flex: none; border-left: 3px solid #222; background: #f7f7f7; }
.drive { height: 63px; background: #f1f1f1; border-bottom: 1px solid #aaa; display: flex; justify-content: flex-end; align-items: flex-start; }
.sheet { height: 114px; background: #fff; box-shadow: 0 2px 8px #ccc; }
```
